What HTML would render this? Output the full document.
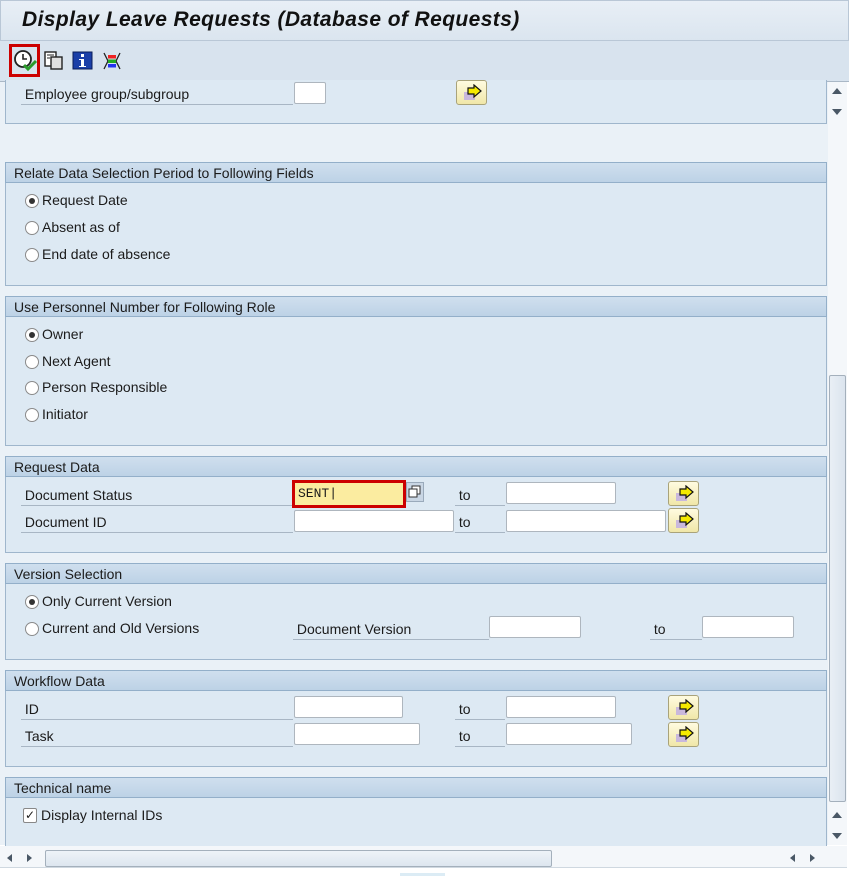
<!DOCTYPE html>
<html><head><meta charset="utf-8"><style>
*{box-sizing:border-box;margin:0;padding:0}
body{width:849px;height:876px;background:#fff;position:relative;overflow:hidden;font-family:"Liberation Sans","DejaVu Sans",sans-serif;font-size:14px;color:#1b1b1b}
.a{position:absolute}
.title{left:0;top:0;width:849px;height:41px;background:linear-gradient(#e8eff6,#dbe5ef);border:1px solid #b9c7d6}
.title span{position:absolute;left:21px;top:7px;font-size:21px;font-weight:bold;font-style:italic;color:#111;letter-spacing:0.4px}
.tb{left:0;top:41px;width:849px;height:41px;background:#d8e3ee;border-bottom:1px solid #aab8c6}
.content{left:0;top:82px;width:828px;height:763px;background:#eaf1f7}
.box{position:absolute;left:5px;width:822px;background:#dde9f3;border:1px solid #9fb6cc}
.hdr{position:absolute;left:5px;width:822px;height:21px;background:linear-gradient(#cfdfee,#bdd2e6);border:1px solid #93afc9;padding:2px 8px;font-size:14px}
.lbl{position:absolute;height:22px;border-bottom:1px solid #a8b6c4;padding-top:3px}
.inp{position:absolute;height:22px;background:#fff;border:1px solid #aeb6be;border-radius:2px}
.btn{position:absolute;width:31px;height:25px;background:linear-gradient(#fffbe0,#f0e7a8);border:1px solid #a9a37a;border-radius:3px}
.btn svg{position:absolute;left:6px;top:3px}
.rad{position:absolute;width:14px;height:14px;border-radius:50%;border:1px solid #8a8a8a;background:#fff}
.rad.on::after{content:"";position:absolute;left:3px;top:3px;width:6px;height:6px;border-radius:50%;background:#333}
.rt{position:absolute}
</style></head><body>
<div class="a title"><span>Display Leave Requests (Database of Requests)</span></div>
<div class="a tb">
 <div class="a" style="left:9px;top:3px;width:31px;height:33px;border:3px solid #c00;"></div>
 <svg class="a" style="left:12px;top:8px" width="26" height="24" viewBox="0 0 26 24"><circle cx="11" cy="10" r="8" fill="#fff" stroke="#222" stroke-width="1.8"/><path d="M11 5v5h4" stroke="#222" stroke-width="1.6" fill="none"/><path d="M12 16l4 4 8-8" stroke="#2a9a2a" stroke-width="3" fill="none"/></svg>
 <svg class="a" style="left:43px;top:9px" width="22" height="22" viewBox="0 0 22 22"><rect x="2" y="2" width="11" height="14" fill="#fff" stroke="#222" stroke-width="1.4"/><rect x="8" y="7" width="11" height="12" fill="#e0e0e0" stroke="#222" stroke-width="1.4"/><path d="M4 5h7M4 8h3" stroke="#222"/></svg>
 <svg class="a" style="left:72px;top:9px" width="22" height="22" viewBox="0 0 22 22"><rect x="1" y="2" width="19" height="17" fill="#1b3fa8" stroke="#0a1d5a"/><rect x="9" y="4" width="3" height="3" fill="#fff"/><path d="M7 9h5v7h2v1H7v-1h2V10H7z" fill="#fff"/></svg>
 <svg class="a" style="left:101px;top:9px" width="22" height="22" viewBox="0 0 22 22"><path d="M3 3l4 8-4 8M19 3l-4 8 4 8" stroke="#222" stroke-width="1.3" fill="none"/><rect x="7" y="5" width="8" height="3.5" fill="#e22"/><rect x="7" y="9.5" width="8" height="3.5" fill="#2a2"/><rect x="7" y="14" width="8" height="3.5" fill="#23e"/></svg>
</div>
<div class="a content"></div>

<div class="box" style="top:80px;height:44px;border-top:none"></div>
<div class="lbl" style="left:21px;top:83px;width:272px">&nbsp;Employee group/subgroup</div>
<div class="inp" style="left:294px;top:82px;width:32px"></div>
<div class="btn" style="left:456px;top:80px"><svg width="20" height="18" viewBox="0 0 20 18"><rect x="1" y="8" width="11" height="8" fill="#c9b8dc"/><path d="M5 4h6V1l7 6-7 6v-3H5z" fill="#f5ea00" stroke="#111" stroke-width="1.2"/></svg></div>

<div class="box" style="top:162px;height:124px"></div>
<div class="hdr" style="top:162px">Relate Data Selection Period to Following Fields</div>
<div class="rad on" style="left:25px;top:194px"></div><div class="rt" style="left:42px;top:192px">Request Date</div>
<div class="rad" style="left:25px;top:221px"></div><div class="rt" style="left:42px;top:219px">Absent as of</div>
<div class="rad" style="left:25px;top:248px"></div><div class="rt" style="left:42px;top:246px">End date of absence</div>

<div class="box" style="top:296px;height:150px"></div>
<div class="hdr" style="top:296px">Use Personnel Number for Following Role</div>
<div class="rad on" style="left:25px;top:328px"></div><div class="rt" style="left:42px;top:326px">Owner</div>
<div class="rad" style="left:25px;top:355px"></div><div class="rt" style="left:42px;top:353px">Next Agent</div>
<div class="rad" style="left:25px;top:381px"></div><div class="rt" style="left:42px;top:379px">Person Responsible</div>
<div class="rad" style="left:25px;top:408px"></div><div class="rt" style="left:42px;top:406px">Initiator</div>

<div class="box" style="top:456px;height:97px"></div>
<div class="hdr" style="top:456px">Request Data</div>
<div class="lbl" style="left:21px;top:484px;width:272px">&nbsp;Document Status</div>
<div class="a" style="left:292px;top:480px;width:114px;height:28px;border:3px solid #c00;background:#fbeca0"></div>
<div class="a" style="left:298px;top:486px;font-family:'Liberation Mono',monospace;font-size:13px">SENT|</div>
<div class="a" style="left:406px;top:482px;width:18px;height:20px;background:#c9d6e4;border:1px solid #9aaabb"></div>
<svg class="a" style="left:408px;top:485px" width="14" height="14" viewBox="0 0 14 14"><rect x="4" y="1" width="8" height="8" fill="#fff" stroke="#333"/><rect x="1" y="4" width="8" height="8" fill="#fff" stroke="#333"/></svg>
<div class="lbl" style="left:455px;top:484px;width:50px">&nbsp;to</div>
<div class="inp" style="left:506px;top:482px;width:110px"></div>
<div class="btn" style="left:668px;top:481px"><svg width="20" height="18" viewBox="0 0 20 18"><rect x="1" y="8" width="11" height="8" fill="#c9b8dc"/><path d="M5 4h6V1l7 6-7 6v-3H5z" fill="#f5ea00" stroke="#111" stroke-width="1.2"/></svg></div>
<div class="lbl" style="left:21px;top:511px;width:272px">&nbsp;Document ID</div>
<div class="inp" style="left:294px;top:510px;width:160px"></div>
<div class="lbl" style="left:455px;top:511px;width:50px">&nbsp;to</div>
<div class="inp" style="left:506px;top:510px;width:160px"></div>
<div class="btn" style="left:668px;top:508px"><svg width="20" height="18" viewBox="0 0 20 18"><rect x="1" y="8" width="11" height="8" fill="#c9b8dc"/><path d="M5 4h6V1l7 6-7 6v-3H5z" fill="#f5ea00" stroke="#111" stroke-width="1.2"/></svg></div>

<div class="box" style="top:563px;height:97px"></div>
<div class="hdr" style="top:563px">Version Selection</div>
<div class="rad on" style="left:25px;top:595px"></div><div class="rt" style="left:42px;top:593px">Only Current Version</div>
<div class="rad" style="left:25px;top:622px"></div><div class="rt" style="left:42px;top:620px">Current and Old Versions</div>
<div class="lbl" style="left:293px;top:618px;width:196px">&nbsp;Document Version</div>
<div class="inp" style="left:489px;top:616px;width:92px"></div>
<div class="lbl" style="left:650px;top:618px;width:52px">&nbsp;to</div>
<div class="inp" style="left:702px;top:616px;width:92px"></div>

<div class="box" style="top:670px;height:97px"></div>
<div class="hdr" style="top:670px">Workflow Data</div>
<div class="lbl" style="left:21px;top:698px;width:272px">&nbsp;ID</div>
<div class="inp" style="left:294px;top:696px;width:109px"></div>
<div class="lbl" style="left:455px;top:698px;width:50px">&nbsp;to</div>
<div class="inp" style="left:506px;top:696px;width:110px"></div>
<div class="btn" style="left:668px;top:695px"><svg width="20" height="18" viewBox="0 0 20 18"><rect x="1" y="8" width="11" height="8" fill="#c9b8dc"/><path d="M5 4h6V1l7 6-7 6v-3H5z" fill="#f5ea00" stroke="#111" stroke-width="1.2"/></svg></div>
<div class="lbl" style="left:21px;top:725px;width:272px">&nbsp;Task</div>
<div class="inp" style="left:294px;top:723px;width:126px"></div>
<div class="lbl" style="left:455px;top:725px;width:50px">&nbsp;to</div>
<div class="inp" style="left:506px;top:723px;width:126px"></div>
<div class="btn" style="left:668px;top:722px"><svg width="20" height="18" viewBox="0 0 20 18"><rect x="1" y="8" width="11" height="8" fill="#c9b8dc"/><path d="M5 4h6V1l7 6-7 6v-3H5z" fill="#f5ea00" stroke="#111" stroke-width="1.2"/></svg></div>

<div class="box" style="top:777px;height:70px"></div>
<div class="hdr" style="top:777px">Technical name</div>
<div class="a" style="left:23px;top:808px;width:14px;height:15px;border:1px solid #888;background:#fff;border-radius:2px;font-size:12px;line-height:13px;text-align:center">✓</div>
<div class="rt" style="left:41px;top:807px">Display Internal IDs</div>

<div class="a" style="left:828px;top:82px;width:19px;height:763px;background:#f4f7fa"></div>
<div class="a" style="left:832px;top:88px;width:0;height:0;border-left:5px solid transparent;border-right:5px solid transparent;border-bottom:6px solid #4a5866"></div>
<div class="a" style="left:832px;top:109px;width:0;height:0;border-left:5px solid transparent;border-right:5px solid transparent;border-top:6px solid #4a5866"></div>
<div class="a" style="left:829px;top:375px;width:17px;height:427px;background:linear-gradient(90deg,#e9eff5,#dbe4ee);border:1px solid #a4b0bc;border-radius:2px"></div>
<div class="a" style="left:832px;top:812px;width:0;height:0;border-left:5px solid transparent;border-right:5px solid transparent;border-bottom:6px solid #4a5866"></div>
<div class="a" style="left:832px;top:833px;width:0;height:0;border-left:5px solid transparent;border-right:5px solid transparent;border-top:6px solid #4a5866"></div>

<div class="a" style="left:0;top:846px;width:847px;height:22px;background:#f4f7fa;border-bottom:1px solid #cfd8e0"></div>
<div class="a" style="left:7px;top:854px;border-top:4px solid transparent;border-bottom:4px solid transparent;border-right:5px solid #4a5866"></div>
<div class="a" style="left:27px;top:854px;border-top:4px solid transparent;border-bottom:4px solid transparent;border-left:5px solid #4a5866"></div>
<div class="a" style="left:45px;top:850px;width:507px;height:17px;background:linear-gradient(#eef3f8,#dde6ef);border:1px solid #a4b0bc;border-radius:2px"></div>
<div class="a" style="left:790px;top:854px;border-top:4px solid transparent;border-bottom:4px solid transparent;border-right:5px solid #4a5866"></div>
<div class="a" style="left:810px;top:854px;border-top:4px solid transparent;border-bottom:4px solid transparent;border-left:5px solid #4a5866"></div>
<div class="a" style="left:400px;top:873px;width:45px;height:3px;background:#dcecf5"></div>
</body></html>
